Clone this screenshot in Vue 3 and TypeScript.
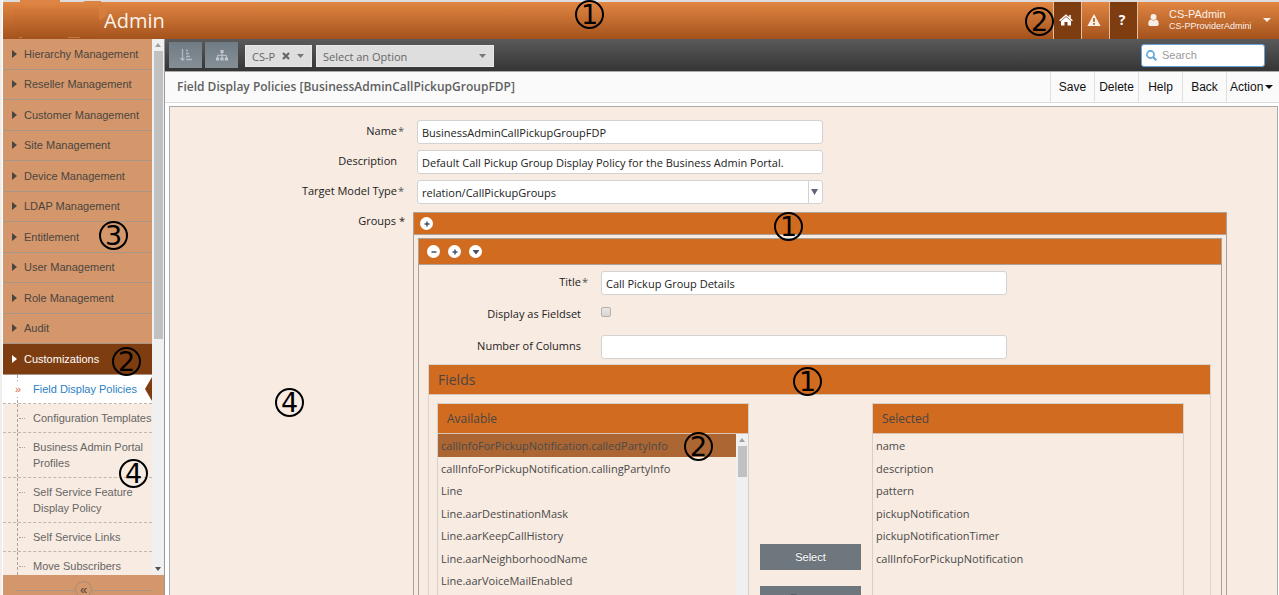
<script setup lang="ts">
import { ref } from 'vue'

interface Marker {
  label: string
  spot: string
}

const menu: string[] = [
  'Hierarchy Management',
  'Reseller Management',
  'Customer Management',
  'Site Management',
  'Device Management',
  'LDAP Management',
  'Entitlement',
  'User Management',
  'Role Management',
  'Audit',
  'Customizations',
]
const activeMenu = 'Customizations'

const submenu: string[] = [
  'Field Display Policies',
  'Configuration Templates',
  'Business Admin Portal Profiles',
  'Self Service Feature Display Policy',
  'Self Service Links',
  'Move Subscribers',
]
const activeSub = 'Field Display Policies'

const pageActions: string[] = ['Save', 'Delete', 'Help', 'Back']

const available: string[] = [
  'callInfoForPickupNotification.calledPartyInfo',
  'callInfoForPickupNotification.callingPartyInfo',
  'Line',
  'Line.aarDestinationMask',
  'Line.aarKeepCallHistory',
  'Line.aarNeighborhoodName',
  'Line.aarVoiceMailEnabled',
]
const selected: string[] = [
  'name',
  'description',
  'pattern',
  'pickupNotification',
  'pickupNotificationTimer',
  'callInfoForPickupNotification',
]

const markers: Marker[] = [
  { label: '1', spot: 'm-header' },
  { label: '2', spot: 'm-home' },
  { label: '1', spot: 'm-groups' },
  { label: '3', spot: 'm-menu' },
  { label: '2', spot: 'm-active' },
  { label: '1', spot: 'm-fields' },
  { label: '4', spot: 'm-canvas' },
  { label: '4', spot: 'm-submenu' },
  { label: '2', spot: 'm-option' },
]

const highlighted = ref(available[0])
const name = ref('BusinessAdminCallPickupGroupFDP')
const description = ref('Default Call Pickup Group Display Policy for the Business Admin Portal.')
const title = ref('Call Pickup Group Details')
const columns = ref('')
const asFieldset = ref(false)
const search = ref('')
</script>

<template>
  <div class="app">
    <header class="topbar">
      <div class="brand">
        <svg class="logo" viewBox="0 0 90 39" aria-hidden="true">
          <path d="M6 0h40v3H6zM70 1h17v2H70z" fill="#dd8544" />
          <path d="M85 3a9 9 0 0 1 8 8c0 5-3 8-8 9z" fill="#d9803f" opacity=".7" />
          <path d="M0 8h85v29H0z" fill="#a85a24" opacity=".06" />
          <path d="M54 37h12v1H54zM5 37h3v1H5z" fill="#c07a48" />
        </svg>
        <span class="product">Admin</span>
      </div>
      <nav class="shortcuts" aria-label="Shortcuts">
        <button type="button" class="shortcut dark" aria-label="Home">
          <svg width="14" height="12" viewBox="0 0 14 12"><path d="M7 3 12 7v4.500H8.500V8h-3v3.500H2V7z" fill="#fff" /><path d="M.6 6.700 7 1.300l6.400 5.400M11 1v3" fill="none" stroke="#fff" stroke-width="1.500" /></svg>
        </button>
        <button type="button" class="shortcut" aria-label="Alerts">
          <svg width="14" height="12" viewBox="0 0 14 12"><path d="M7 0 13.600 12H.4z" fill="#f7efe8" /><path d="M7 4v4M7 9v1.700" stroke="#bb6429" stroke-width="1.800" /></svg>
        </button>
        <button type="button" class="shortcut dark help" aria-label="Help topics">?</button>
        <button type="button" class="account">
          <svg width="11" height="12" viewBox="0 0 11 12"><circle cx="5.500" cy="3" r="3" fill="#f7efe8" /><path d="M.3 10c0-3 1-4.400 2.500-4.600 1.500 1.400 3.900 1.400 5.400 0 1.500.2 2.500 1.600 2.500 4.600 0 1.200-.7 2-1.800 2H2.100C1 12 .3 11.200.3 10z" fill="#f7efe8" /></svg>
          <span class="who"><span class="user">CS-PAdmin</span><span class="role">CS-PProviderAdministrator</span></span>
          <svg width="8" height="4" viewBox="0 0 8 4"><path d="M0 0h8L4 4z" fill="#f7efe8" /></svg>
        </button>
      </nav>
    </header>

    <div class="body">
      <aside class="sidebar">
        <div class="scroller">
          <nav class="menu" aria-label="Main">
            <ul class="level1">
              <li v-for="item in menu" :key="item" :class="{ active: item === activeMenu }">
                <a href="#">
                  <svg width="5" height="8" viewBox="0 0 5 8"><path d="M0 0 5 4 0 8z" fill="currentColor" /></svg>
                  {{ item }}
                </a>
              </li>
            </ul>
            <ul class="level2">
              <li v-for="item in submenu" :key="item" :class="{ current: item === activeSub }">
                <a href="#">{{ item }}</a>
              </li>
            </ul>
          </nav>
          <div class="track">
            <svg width="6" height="4" viewBox="0 0 6 4"><path d="M0 4 3 0l3 4z" fill="#a0a0a0" /></svg>
            <div class="thumb"></div>
            <svg width="6" height="4" viewBox="0 0 6 4"><path d="M0 0h6L3 4z" fill="#505050" /></svg>
          </div>
        </div>
        <div class="collapse">
          <button type="button" aria-label="Collapse menu">«</button>
        </div>
      </aside>

      <main class="main">
        <div class="toolbar">
          <button type="button" class="tool" aria-label="Sort">
            <svg width="12" height="12" viewBox="0 0 12 12"><path d="M2.500 0v11M.5 9l2 2.300L4.500 9M6 1.500h2M6 4.500h3M6 7.500h4M6 10.500h6" stroke="#b3babf" stroke-width="1.300" fill="none" /></svg>
          </button>
          <button type="button" class="tool" aria-label="Hierarchy">
            <svg width="12" height="11" viewBox="0 0 12 11"><path d="M4.500 0h3v3h-3zM0 7.500h3.200v3H0zM4.400 7.500h3.200v3H4.400zM8.800 7.500H12v3H8.800z" fill="#c3c9cd" /><path d="M6 3v4.500M1.600 7.500v-2.200h8.800v2.200" stroke="#c3c9cd" fill="none" /></svg>
          </button>
          <div class="picker short">
            <select aria-label="Provider"><option>CS-P</option></select>
            <button type="button" class="clear" aria-label="Clear provider">
              <svg width="8" height="8" viewBox="0 0 8 8"><path d="m1 1 6 6M7 1 1 7" stroke="#666" stroke-width="2.200" /></svg>
            </button>
            <svg class="arrow" width="7" height="4" viewBox="0 0 7 4"><path d="M0 0h7L3.500 4z" fill="#777" /></svg>
          </div>
          <div class="picker long">
            <select aria-label="Customer"><option>Select an Option</option></select>
            <svg class="arrow" width="7" height="4" viewBox="0 0 7 4"><path d="M0 0h7L3.500 4z" fill="#777" /></svg>
          </div>
          <label class="search">
            <svg width="11" height="11" viewBox="0 0 11 11"><circle cx="4.500" cy="4.500" r="3.600" fill="none" stroke="#5ea3d8" stroke-width="1.600" /><path d="m7 7 3.300 3.300" stroke="#5ea3d8" stroke-width="2" /></svg>
            <input v-model="search" type="text" placeholder="Search" aria-label="Search" />
          </label>
        </div>

        <div class="titlebar">
          <h1>Field Display Policies [BusinessAdminCallPickupGroupFDP]</h1>
          <div class="actions">
            <button v-for="a in pageActions" :key="a" type="button">{{ a }}</button>
            <button type="button" class="menu-action">
              Action
              <svg width="8" height="4" viewBox="0 0 8 4"><path d="M0 0h8L4 4z" fill="#111" /></svg>
            </button>
          </div>
        </div>

        <form class="panel" @submit.prevent>
          <div class="row">
            <label for="f-name">Name<i>*</i></label>
            <input id="f-name" v-model="name" type="text" />
          </div>
          <div class="row">
            <label for="f-desc">Description<i></i></label>
            <input id="f-desc" v-model="description" type="text" />
          </div>
          <div class="row">
            <label for="f-type">Target Model Type<i>*</i></label>
            <div class="combo">
              <select id="f-type"><option>relation/CallPickupGroups</option></select>
              <span class="drop"><svg width="7" height="6" viewBox="0 0 7 6"><path d="M0 0h7L3.500 6z" fill="#606478" /></svg></span>
            </div>
          </div>
          <div class="row groups-row">
            <span class="caption">Groups *</span>
            <section class="groups">
              <div class="bar">
                <button type="button" class="round" aria-label="Add group"><svg viewBox="0 0 6 6"><path d="M3 .5v5M.5 3h5" /></svg></button>
              </div>
              <section class="group">
                <div class="bar inner">
                  <button type="button" class="round" aria-label="Remove group"><svg viewBox="0 0 6 6"><path d="M.5 3h5" /></svg></button>
                  <button type="button" class="round" aria-label="Insert group"><svg viewBox="0 0 6 6"><path d="M3 .5v5M.5 3h5" /></svg></button>
                  <button type="button" class="round" aria-label="Move group down"><svg viewBox="0 0 6 6"><path d="M1 1.800h4L3 4.300z" class="solid" /></svg></button>
                </div>
                <div class="row sub">
                  <label for="g-title">Title<i>*</i></label>
                  <input id="g-title" v-model="title" type="text" />
                </div>
                <div class="row sub">
                  <label for="g-fs">Display as Fieldset<i></i></label>
                  <input id="g-fs" v-model="asFieldset" type="checkbox" />
                </div>
                <div class="row sub">
                  <label for="g-cols">Number of Columns<i></i></label>
                  <input id="g-cols" v-model="columns" type="text" />
                </div>
                <section class="fields">
                  <h2>Fields</h2>
                  <div class="transfer">
                    <div class="list">
                      <h3>Available</h3>
                      <div class="list-body">
                        <ul>
                          <li v-for="f in available" :key="f" :class="{ on: f === highlighted }" @click="highlighted = f">{{ f }}</li>
                        </ul>
                        <div class="track small">
                          <svg width="6" height="4" viewBox="0 0 6 4"><path d="M0 4 3 0l3 4z" fill="#a0a0a0" /></svg>
                          <div class="thumb"></div>
                        </div>
                      </div>
                    </div>
                    <div class="moves">
                      <button type="button">Select</button>
                      <button type="button">Remove</button>
                    </div>
                    <div class="list">
                      <h3>Selected</h3>
                      <div class="list-body">
                        <ul>
                          <li v-for="f in selected" :key="f">{{ f }}</li>
                        </ul>
                      </div>
                    </div>
                  </div>
                </section>
              </section>
            </section>
          </div>
        </form>
      </main>
    </div>

    <span v-for="m in markers" :key="m.spot" class="marker" :class="m.spot">{{ m.label }}</span>
  </div>
</template>

<style>
html,
body {
  margin: 0;
  background: #fff;
}
</style>

<style scoped>
* {
  box-sizing: border-box;
}
.app {
  position: relative;
  display: flex;
  flex-direction: column;
  height: 100vh;
  padding-left: 3px;
  overflow: hidden;
  background: #fff;
  box-shadow: inset 2px 0 #eee;
  font-family: 'Open Sans', 'Noto Sans', sans-serif;
  font-size: 12px;
  color: #222;
}
button,
input,
select {
  margin: 0;
  font: inherit;
  color: inherit;
}
button {
  padding: 0;
  border: 0;
  background: none;
}
ul,
h1,
h2,
h3 {
  margin: 0;
  padding: 0;
  list-style: none;
  font-weight: 400;
}
svg {
  display: block;
  flex: none;
}
a {
  color: inherit;
  text-decoration: none;
}

/* top bar */
.topbar {
  display: flex;
  flex: none;
  justify-content: space-between;
  height: 39px;
  background: linear-gradient(#ddd 0 2px, #e18643 2px, #a4521c);
}
.brand {
  display: flex;
  align-items: center;
  padding-left: 11px;
}
.logo {
  width: 90px;
  height: 39px;
  overflow: visible;
}
.product {
  padding-top: 3px;
  font-size: 20px;
  line-height: 28px;
  color: #fbf3ec;
}
.shortcuts {
  display: flex;
  padding-top: 2px;
}
.shortcut {
  display: flex;
  align-items: center;
  justify-content: center;
  width: 28px;
  padding-right: 3px;
  padding-bottom: 2px;
  border-left: 1px solid #e6bd9e;
}
.dark {
  background: #7e3d10;
}
.help {
  font-weight: 700;
  font-size: 14px;
  color: #fff;
}
.account {
  display: flex;
  align-items: center;
  gap: 10px;
  padding: 0 8px 2px 10px;
  border-left: 1px solid #e6bd9e;
  font-family: 'Liberation Sans', Arial, sans-serif;
  color: #fbf1e9;
  text-align: left;
}
.who {
  display: flex;
  flex-direction: column;
  width: 82px;
  margin-right: 2px;
  overflow: hidden;
  white-space: nowrap;
}
.user {
  font-size: 11px;
  line-height: 12px;
}
.role {
  font-size: 9px;
  line-height: 12px;
}

/* frame */
.body {
  display: flex;
  flex: 1;
  min-height: 0;
}
.sidebar {
  display: flex;
  flex: none;
  flex-direction: column;
  width: 162px;
  border-right: 1px solid #999;
  font-family: 'Liberation Sans', Arial, sans-serif;
  font-size: 11px;
}
.scroller {
  display: flex;
  flex: 1;
  min-height: 0;
}
.menu {
  flex: 1;
  overflow: hidden;
  background: #f8ebe1;
}
.level1 li {
  height: 31px;
  border-bottom: 1px solid #aa9685;
  background: #d4976b;
  color: #4a4540;
}
.level1 li:nth-child(even) {
  height: 30px;
}
.level1 li.active {
  background: #7e3d10;
  color: #fff;
}
.level1 a {
  display: flex;
  align-items: center;
  gap: 7px;
  height: 100%;
  padding: 0 0 1px 9px;
}
.level2 li {
  position: relative;
  padding: 6px 0 6px 30px;
  border-bottom: 1px dashed #c3b7ad;
  line-height: 16px;
  color: #666;
}
.level2 li::before {
  content: '';
  position: absolute;
  top: 0;
  bottom: 0;
  left: 14px;
  border-left: 1px dashed #aaa29b;
}
.level2 li::after {
  content: '';
  position: absolute;
  top: 14px;
  left: 16px;
  width: 6px;
  border-top: 1px dotted #aaa29b;
}
.level2 li.current {
  background: #fff;
  color: #2a7fc4;
}
.level2 li.current::after {
  content: '»';
  top: 6px;
  left: 12px;
  border: 0;
  background: #fff;
  color: #cf6a4a;
}
.level2 li.current a::after {
  content: '';
  position: absolute;
  top: 2px;
  right: 0;
  border: 12px solid transparent;
  border-right: 7px solid #7e3d10;
  border-left: 0;
}
.track {
  display: flex;
  flex: none;
  flex-direction: column;
  align-items: center;
  gap: 4px;
  width: 12px;
  padding: 4px 0;
  background: #f0f0f0;
}
.thumb {
  width: 9px;
  height: 288px;
  margin-bottom: auto;
  background: #c1c1c1;
}
.collapse {
  position: relative;
  display: flex;
  flex: none;
  justify-content: center;
  height: 20px;
  padding-top: 6px;
  overflow: hidden;
  background: #d4976b;
}
.collapse::before {
  content: '';
  position: absolute;
  top: 15px;
  right: 12px;
  left: 12px;
  border-top: 1px solid #aa9685;
}
.collapse button {
  position: relative;
  width: 17px;
  height: 17px;
  border: 1px solid #a08c7c;
  border-radius: 50%;
  background: #d4976b;
  font-size: 13px;
  line-height: 13px;
  color: #4a4540;
}

/* main */
.main {
  display: flex;
  flex: 1;
  flex-direction: column;
  min-width: 0;
}
.toolbar {
  display: flex;
  flex: none;
  align-items: center;
  height: 33px;
  padding: 0 14px 0 4px;
  border-bottom: 1px solid #aaa;
  background: linear-gradient(#5a5a5a, #353535);
}
.tool {
  display: flex;
  align-items: center;
  justify-content: center;
  width: 33px;
  height: 26px;
  margin-right: 3px;
  background: linear-gradient(#717b84, #858f96);
}
.picker {
  position: relative;
  height: 22px;
  margin: 1px 4px 0 0;
}
.picker select {
  width: 100%;
  height: 100%;
  padding: 2px 6px 0;
  appearance: none;
  border: 1px solid #e8e8e8;
  border-radius: 0;
  background: #dedede;
  font-size: 11px;
  color: #666;
}
.short {
  width: 67px;
  margin-left: 4px;
}
.long {
  width: 178px;
}
.arrow {
  position: absolute;
  top: 9px;
  right: 8px;
  pointer-events: none;
}
.clear {
  position: absolute;
  top: 7px;
  right: 22px;
}
.search {
  display: flex;
  align-items: center;
  gap: 5px;
  width: 124px;
  height: 23px;
  margin-left: auto;
  padding: 0 4px;
  border: 1px solid #6aa0d8;
  border-radius: 3px;
  background: #fff;
}
.search input {
  flex: 1;
  min-width: 0;
  padding: 0;
  border: 0;
  outline: 0;
  font-family: 'Liberation Sans', Arial, sans-serif;
  font-size: 11px;
}
.search input::placeholder {
  color: #999;
}
.titlebar {
  display: flex;
  flex: none;
  align-items: stretch;
  justify-content: space-between;
  height: 31px;
  border-bottom: 1px solid #ddd;
  background: #fafafa;
}
.titlebar h1 {
  padding-left: 12px;
  font-size: 12px;
  font-weight: 600;
  line-height: 30px;
  color: #606060;
}
.actions {
  display: flex;
}
.actions button {
  width: 44px;
  border-left: 1px solid #e0e0e0;
  font-family: 'Liberation Sans', Arial, sans-serif;
  font-size: 12px;
  color: #111;
}
.actions .menu-action {
  display: flex;
  align-items: center;
  gap: 2px;
  width: 53px;
  padding-left: 3px;
}

/* form */
.panel {
  display: flex;
  flex: 1;
  flex-direction: column;
  gap: 6px;
  min-height: 0;
  margin: 3px 1px 0 4px;
  padding: 13px 50px 0 0;
  overflow: hidden;
  border: 1px solid #aaa;
  border-bottom: 0;
  background: #f8ebe1;
}
.row {
  display: flex;
  gap: 12px;
  font-size: 11px;
}
.row > label,
.caption {
  width: 235px;
  height: 24px;
  line-height: 21px;
  text-align: right;
}
.row i {
  display: inline-block;
  width: 8px;
  font-style: normal;
  text-align: center;
  color: #555;
}
.row input[type='text'],
.combo {
  width: 406px;
  height: 24px;
  border: 1px solid #d2d2d2;
  border-radius: 3px;
  background: #fff;
}
.row input[type='text'],
.combo select {
  padding: 0 4px;
}
.combo {
  display: flex;
  position: relative;
}
.combo select {
  flex: 1;
  appearance: none;
  border: 0;
  background: none;
}
.drop {
  position: absolute;
  top: 0;
  right: 0;
  bottom: 0;
  display: flex;
  align-items: center;
  width: 14px;
  padding-left: 2px;
  border-left: 1px solid #d2d2d2;
  pointer-events: none;
}
.groups-row {
  gap: 8px;
  padding-top: 2px;
}
.caption {
  line-height: 17px;
}
.groups {
  flex: 1;
  min-width: 0;
  padding: 0 4px;
  border: 1px solid #aaa29b;
}
.bar {
  display: flex;
  align-items: center;
  gap: 8px;
  height: 22px;
  margin: 0 -4px;
  padding: 0 6px;
  border-bottom: 1px solid #aaa29b;
  background: #d06b20;
}
.bar.inner {
  height: 26px;
  margin: 0 0 6px;
  padding: 0 8px;
}
.round {
  display: flex;
  align-items: center;
  justify-content: center;
  width: 13px;
  height: 13px;
  border-radius: 50%;
  background: #fff;
}
.round svg {
  width: 6px;
  height: 6px;
  fill: none;
  stroke: #4a5068;
  stroke-width: 1.5;
}
.round .solid {
  fill: #4a5068;
}
.group {
  margin-top: 3px;
  border: 1px solid #aaa29b;
}
.sub {
  min-height: 24px;
  margin-bottom: 8px;
}
.sub > label {
  width: 170px;
}
.sub input[type='checkbox'] {
  width: 10px;
  height: 10px;
  margin-top: 4px;
  appearance: none;
  border: 1px solid #b5b0ac;
  border-radius: 2px;
  background: linear-gradient(#e8e6e4, #d8d6d4);
}
.fields {
  margin: -3px 10px 0 9px;
  border: 1px solid #d8d4d0;
}
.fields h2 {
  height: 30px;
  padding-left: 9px;
  border-bottom: 1px solid #d8c4b4;
  background: #d06b20;
  font-size: 14px;
  line-height: 30px;
  color: #4a4540;
}
.transfer {
  display: grid;
  grid-template-columns: 1fr 101px 1fr;
  gap: 11px;
  padding: 8px 26px 0 8px;
}
.list {
  border: 1px solid #d4d0cc;
}
.list h3 {
  height: 30px;
  padding-left: 9px;
  border-bottom: 1px solid #d8c4b4;
  background: #d06b20;
  font-size: 12px;
  line-height: 30px;
  color: #4a4540;
}
.list-body {
  display: flex;
  min-height: 220px;
}
.list ul {
  flex: 1;
}
.list li {
  height: 23px;
  padding-left: 3px;
  line-height: 23px;
  color: #4a4a4a;
}
.list li:nth-child(even) {
  height: 22px;
}
.list li.on {
  background: #ac6633;
}
.small {
  width: 12px;
}
.small .thumb {
  height: 31px;
}
.moves {
  display: flex;
  flex-direction: column;
  gap: 16px;
  padding-top: 141px;
}
.moves button {
  height: 26px;
  background: #6e777e;
  font-family: 'Liberation Sans', Arial, sans-serif;
  font-size: 11px;
  color: #fff;
  text-shadow: 0 -1px rgba(0, 0, 0, 0.25);
}

/* numbered annotations pinned over the page */
.marker {
  position: absolute;
  display: flex;
  justify-content: center;
  width: 29px;
  height: 29px;
  margin: -14px 0 0 -14px;
  border: 2px solid #000;
  border-radius: 50%;
  font-family: 'DejaVu Sans', sans-serif;
  font-size: 27px;
  line-height: 25px;
  color: #000;
  pointer-events: none;
}
.m-header { top: 14px; left: 589px; }
.m-home { top: 21px; left: 1039px; }
.m-groups { top: 226px; left: 788px; }
.m-menu { top: 235px; left: 113px; }
.m-active { top: 361px; left: 126px; }
.m-fields { top: 381px; left: 807px; }
.m-canvas { top: 402px; left: 289px; }
.m-submenu { top: 473px; left: 133px; }
.m-option { top: 446px; left: 698px; }
</style>
